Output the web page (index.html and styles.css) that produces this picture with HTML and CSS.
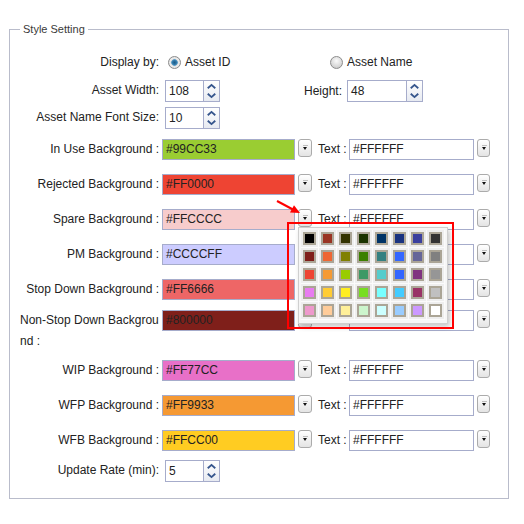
FILE: index.html
```html
<!DOCTYPE html>
<html>
<head>
<meta charset="utf-8">
<link rel="stylesheet" href="styles.css">
</head>
<body>
<div class="page">
  <fieldset class="settings">
    <legend>Style Setting</legend>

    <div class="row row-display">
      <div class="label">Display by:</div>
      <label class="opt opt-first"><span class="radio checked"></span>Asset ID</label>
      <label class="opt"><span class="radio"></span>Asset Name</label>
    </div>

    <div class="row row-size">
      <div class="label">Asset Width:</div>
      <div class="spin">
        <span class="spin-field">108</span>
        <span class="spin-btn"><svg width="16" height="20" viewBox="0 0 16 20"><polyline points="4,7 8,3.5 12,7" /><polyline points="4,13 8,16.5 12,13" /></svg></span>
      </div>
      <div class="label2">Height:</div>
      <div class="spin spin-wide">
        <span class="spin-field">48</span>
        <span class="spin-btn"><svg width="16" height="20" viewBox="0 0 16 20"><polyline points="4,7 8,3.5 12,7" /><polyline points="4,13 8,16.5 12,13" /></svg></span>
      </div>
    </div>

    <div class="row row-font">
      <div class="label">Asset Name Font Size:</div>
      <div class="spin">
        <span class="spin-field">10</span>
        <span class="spin-btn"><svg width="16" height="20" viewBox="0 0 16 20"><polyline points="4,7 8,3.5 12,7" /><polyline points="4,13 8,16.5 12,13" /></svg></span>
      </div>
    </div>

    <div class="row crow first">
      <div class="label">In Use Background :</div>
      <div class="cfield" style="background:#9acd32">#99CC33</div>
      <span class="dd"></span>
      <span class="tlabel">Text :</span>
      <div class="tfield">#FFFFFF</div>
      <span class="dd dd2"></span>
    </div>

    <div class="row crow">
      <div class="label">Rejected Background :</div>
      <div class="cfield" style="background:#ee4433">#FF0000</div>
      <span class="dd"></span>
      <span class="tlabel">Text :</span>
      <div class="tfield">#FFFFFF</div>
      <span class="dd dd2"></span>
    </div>

    <div class="row crow">
      <div class="label">Spare Background :</div>
      <div class="cfield" style="background:#f7cccc">#FFCCCC</div>
      <span class="dd-wrap">
        <span class="dd"></span>
        <div class="picker">
          <span class="cell"><i style="background:#000000"></i></span>
          <span class="cell"><i style="background:#993322"></i></span>
          <span class="cell"><i style="background:#333300"></i></span>
          <span class="cell"><i style="background:#1a3300"></i></span>
          <span class="cell"><i style="background:#003366"></i></span>
          <span class="cell"><i style="background:#1a3380"></i></span>
          <span class="cell"><i style="background:#3a3f9e"></i></span>
          <span class="cell"><i style="background:#333333"></i></span>

          <span class="cell"><i style="background:#7f1f1a"></i></span>
          <span class="cell"><i style="background:#ee6633"></i></span>
          <span class="cell"><i style="background:#808000"></i></span>
          <span class="cell"><i style="background:#3d8000"></i></span>
          <span class="cell"><i style="background:#338080"></i></span>
          <span class="cell"><i style="background:#3366ff"></i></span>
          <span class="cell"><i style="background:#666699"></i></span>
          <span class="cell"><i style="background:#808080"></i></span>

          <span class="cell"><i style="background:#ee4433"></i></span>
          <span class="cell"><i style="background:#f59a33"></i></span>
          <span class="cell"><i style="background:#99cc00"></i></span>
          <span class="cell"><i style="background:#3d9966"></i></span>
          <span class="cell"><i style="background:#55cccc"></i></span>
          <span class="cell"><i style="background:#3366ff"></i></span>
          <span class="cell"><i style="background:#803380"></i></span>
          <span class="cell"><i style="background:#969696"></i></span>

          <span class="cell"><i style="background:#e87cf0"></i></span>
          <span class="cell"><i style="background:#ffcc33"></i></span>
          <span class="cell"><i style="background:#ffee22"></i></span>
          <span class="cell"><i style="background:#77dd22"></i></span>
          <span class="cell"><i style="background:#77ffff"></i></span>
          <span class="cell"><i style="background:#44ccff"></i></span>
          <span class="cell"><i style="background:#993366"></i></span>
          <span class="cell"><i style="background:#c0c0c0"></i></span>

          <span class="cell"><i style="background:#ee99cc"></i></span>
          <span class="cell"><i style="background:#ffcc99"></i></span>
          <span class="cell"><i style="background:#fff099"></i></span>
          <span class="cell"><i style="background:#ccf5cc"></i></span>
          <span class="cell"><i style="background:#ccffff"></i></span>
          <span class="cell"><i style="background:#99ccff"></i></span>
          <span class="cell"><i style="background:#cc99ff"></i></span>
          <span class="cell"><i style="background:#ffffff"></i></span>
        </div>
      </span>
      <span class="tlabel">Text :</span>
      <div class="tfield">#FFFFFF</div>
      <span class="dd dd2"></span>
    </div>

    <div class="row crow">
      <div class="label">PM Background :</div>
      <div class="cfield" style="background:#ccccff">#CCCCFF</div>
      <span class="dd"></span>
      <span class="tlabel">Text :</span>
      <div class="tfield">#FFFFFF</div>
      <span class="dd dd2"></span>
    </div>

    <div class="row crow">
      <div class="label">Stop Down Background :</div>
      <div class="cfield" style="background:#ee6666">#FF6666</div>
      <span class="dd"></span>
      <span class="tlabel">Text :</span>
      <div class="tfield">#FFFFFF</div>
      <span class="dd dd2"></span>
    </div>

    <div class="row crow row-tight">
      <div class="label label-wrap">Non-Stop Down Background :</div>
      <div class="cfield" style="background:#7f1f1a">#800000</div>
      <span class="dd"></span>
      <span class="tlabel">Text :</span>
      <div class="tfield">#FFFFFF</div>
      <span class="dd dd2"></span>
    </div>

    <div class="row crow row-after-wrap">
      <div class="label">WIP Background :</div>
      <div class="cfield" style="background:#e870c8">#FF77CC</div>
      <span class="dd"></span>
      <span class="tlabel">Text :</span>
      <div class="tfield">#FFFFFF</div>
      <span class="dd dd2"></span>
    </div>

    <div class="row crow">
      <div class="label">WFP Background :</div>
      <div class="cfield" style="background:#f59933">#FF9933</div>
      <span class="dd"></span>
      <span class="tlabel">Text :</span>
      <div class="tfield">#FFFFFF</div>
      <span class="dd dd2"></span>
    </div>

    <div class="row crow">
      <div class="label">WFB Background :</div>
      <div class="cfield" style="background:#ffcc22">#FFCC00</div>
      <span class="dd"></span>
      <span class="tlabel">Text :</span>
      <div class="tfield">#FFFFFF</div>
      <span class="dd dd2"></span>
    </div>

    <div class="row row-update">
      <div class="label">Update Rate (min):</div>
      <div class="spin">
        <span class="spin-field">5</span>
        <span class="spin-btn"><svg width="16" height="20" viewBox="0 0 16 20"><polyline points="4,7 8,3.5 12,7" /><polyline points="4,13 8,16.5 12,13" /></svg></span>
      </div>
    </div>
  </fieldset>

  <div class="highlight"></div>
  <svg class="arrow" width="40" height="30" viewBox="0 0 40 30">
    <line x1="7" y1="6" x2="23" y2="14.5" />
    <polygon points="30,18 20,17.6 24,10.2" />
  </svg>
</div>
</body>
</html>
```

FILE: styles.css
```css
html, body {
  margin: 0;
  padding: 0;
  background: #ffffff;
}

body {
  font-family: "Liberation Sans", Arial, sans-serif;
  font-size: 12px;
  color: #222222;
}

.page {
  position: relative;
  width: 524px;
  height: 524px;
  padding: 22px 15px 0 9px;
  box-sizing: border-box;
}

.settings {
  margin: 0;
  width: 500px;
  box-sizing: border-box;
  border: 1px solid #b9bccb;
  padding: 16px 10px 16px 10px;
  display: flex;
  flex-direction: column;
}

.settings legend {
  font-size: 11px;
  line-height: 14px;
  color: #3a3a3a;
  padding: 0 3px;
}

.row {
  display: flex;
  align-items: flex-start;
  flex-shrink: 0;
}

.label {
  width: 139px;
  flex-shrink: 0;
  text-align: right;
  line-height: 21px;
  white-space: nowrap;
}

.label-wrap {
  white-space: normal;
  word-break: break-all;
  text-align: left;
}

/* Display by */
.row-display {
  height: 21px;
  align-items: center;
}

.opt {
  display: flex;
  align-items: center;
  gap: 4px;
  line-height: 21px;
}

.opt-first {
  margin-left: 9px;
  width: 162px;
}

.radio {
  width: 13px;
  height: 13px;
  border-radius: 50%;
  box-sizing: border-box;
  border: 1px solid #8c8c8c;
  background: radial-gradient(circle at 50% 35%, #fafafa 0, #d9d9d9 60%, #bdbdbd 100%);
}

.radio.checked {
  background: radial-gradient(circle at 50% 50%, #1d5b86 0, #2f77a8 2px, #5f9fc8 3px, #dcdcdc 3.6px, #efefef 4.5px, #c4c4c4 100%);
}

/* spinners */
.row-size {
  margin-top: 7px;
}

.row-font {
  margin-top: 5px;
}

.row-update {
  margin-top: 9px;
}

.spin {
  display: flex;
  margin-left: 6px;
  height: 22px;
}

.spin-field {
  width: 38px;
  height: 22px;
  box-sizing: border-box;
  border: 1px solid #a6accb;
  border-right: none;
  background: #ffffff;
  padding-left: 3px;
  line-height: 20px;
}

.spin-wide {
  margin-left: 5px;
}

.spin-wide .spin-field {
  width: 59px;
}

.spin-btn {
  width: 17px;
  height: 22px;
  box-sizing: border-box;
  border: 1px solid #a6accb;
  background: linear-gradient(#ffffff, #e7eaf1);
  display: flex;
  align-items: center;
  justify-content: center;
}

.spin-btn svg polyline {
  fill: none;
  stroke: #35558c;
  stroke-width: 2;
}

.label2 {
  width: 122px;
  text-align: right;
  line-height: 22px;
}

/* colour rows */
.crow {
  margin-top: 14px;
}

.crow.first {
  margin-top: 10px;
}

.row-tight {
  margin-top: 10px;
}

.row-after-wrap {
  margin-top: 8px;
}

.cfield {
  margin-left: 3px;
  width: 133px;
  height: 21px;
  box-sizing: border-box;
  border: 1px solid #a6accb;
  padding-left: 3px;
  line-height: 19px;
  flex-shrink: 0;
}

.dd-wrap {
  position: relative;
  margin-left: 3px;
  display: flex;
}

.dd {
  margin-left: 3px;
  width: 14px;
  height: 18px;
  box-sizing: border-box;
  border: 1px solid #ababab;
  border-radius: 3px;
  background: linear-gradient(#ffffff, #e4e4e4);
  position: relative;
  flex-shrink: 0;
}

.dd-wrap .dd {
  margin-left: 0;
}

.dd::after {
  content: "";
  position: absolute;
  left: 4px;
  top: 7px;
  border-left: 2.5px solid transparent;
  border-right: 2.5px solid transparent;
  border-top: 3px solid #111111;
}

.dd::before {
  content: "";
  position: absolute;
  left: 4px;
  top: 5px;
  width: 5px;
  height: 1px;
  background: #bfbfbf;
}

.dd2 {
  margin-left: 3px;
  width: 13px;
}

.tlabel {
  margin-left: 6px;
  width: 31px;
  line-height: 21px;
  flex-shrink: 0;
}

.tfield {
  width: 125px;
  height: 21px;
  box-sizing: border-box;
  border: 1px solid #a6accb;
  background: #ffffff;
  padding-left: 3px;
  line-height: 19px;
  flex-shrink: 0;
}

/* colour picker popup */
.picker {
  position: absolute;
  left: 0;
  top: 100%;
  z-index: 5;
  width: 150px;
  height: 97px;
  box-sizing: border-box;
  border: 1px solid #cfcfcf;
  background: #f6f6f6;
  padding: 2px;
  display: grid;
  grid-template-columns: repeat(8, 18px);
  grid-auto-rows: 18px;
  box-shadow: 2px 3px 5px rgba(0, 0, 0, 0.22);
}

.cell {
  box-sizing: border-box;
  padding: 2px 0 0 2px;
  background: #eeeeee;
  border-right: 1px solid #fbfbfb;
  border-bottom: 1px solid #fbfbfb;
}

.cell i {
  display: block;
  width: 9px;
  height: 9px;
  border: 2px solid #aba596;
}

/* annotation */
.highlight {
  position: absolute;
  left: 287px;
  top: 222px;
  width: 167px;
  height: 107px;
  box-sizing: border-box;
  border: 2px solid #ff0000;
  z-index: 10;
}

.arrow {
  position: absolute;
  left: 270px;
  top: 195px;
  z-index: 10;
}

.arrow line {
  stroke: #ff0000;
  stroke-width: 2;
}

.arrow polygon {
  fill: #ff0000;
}
```
